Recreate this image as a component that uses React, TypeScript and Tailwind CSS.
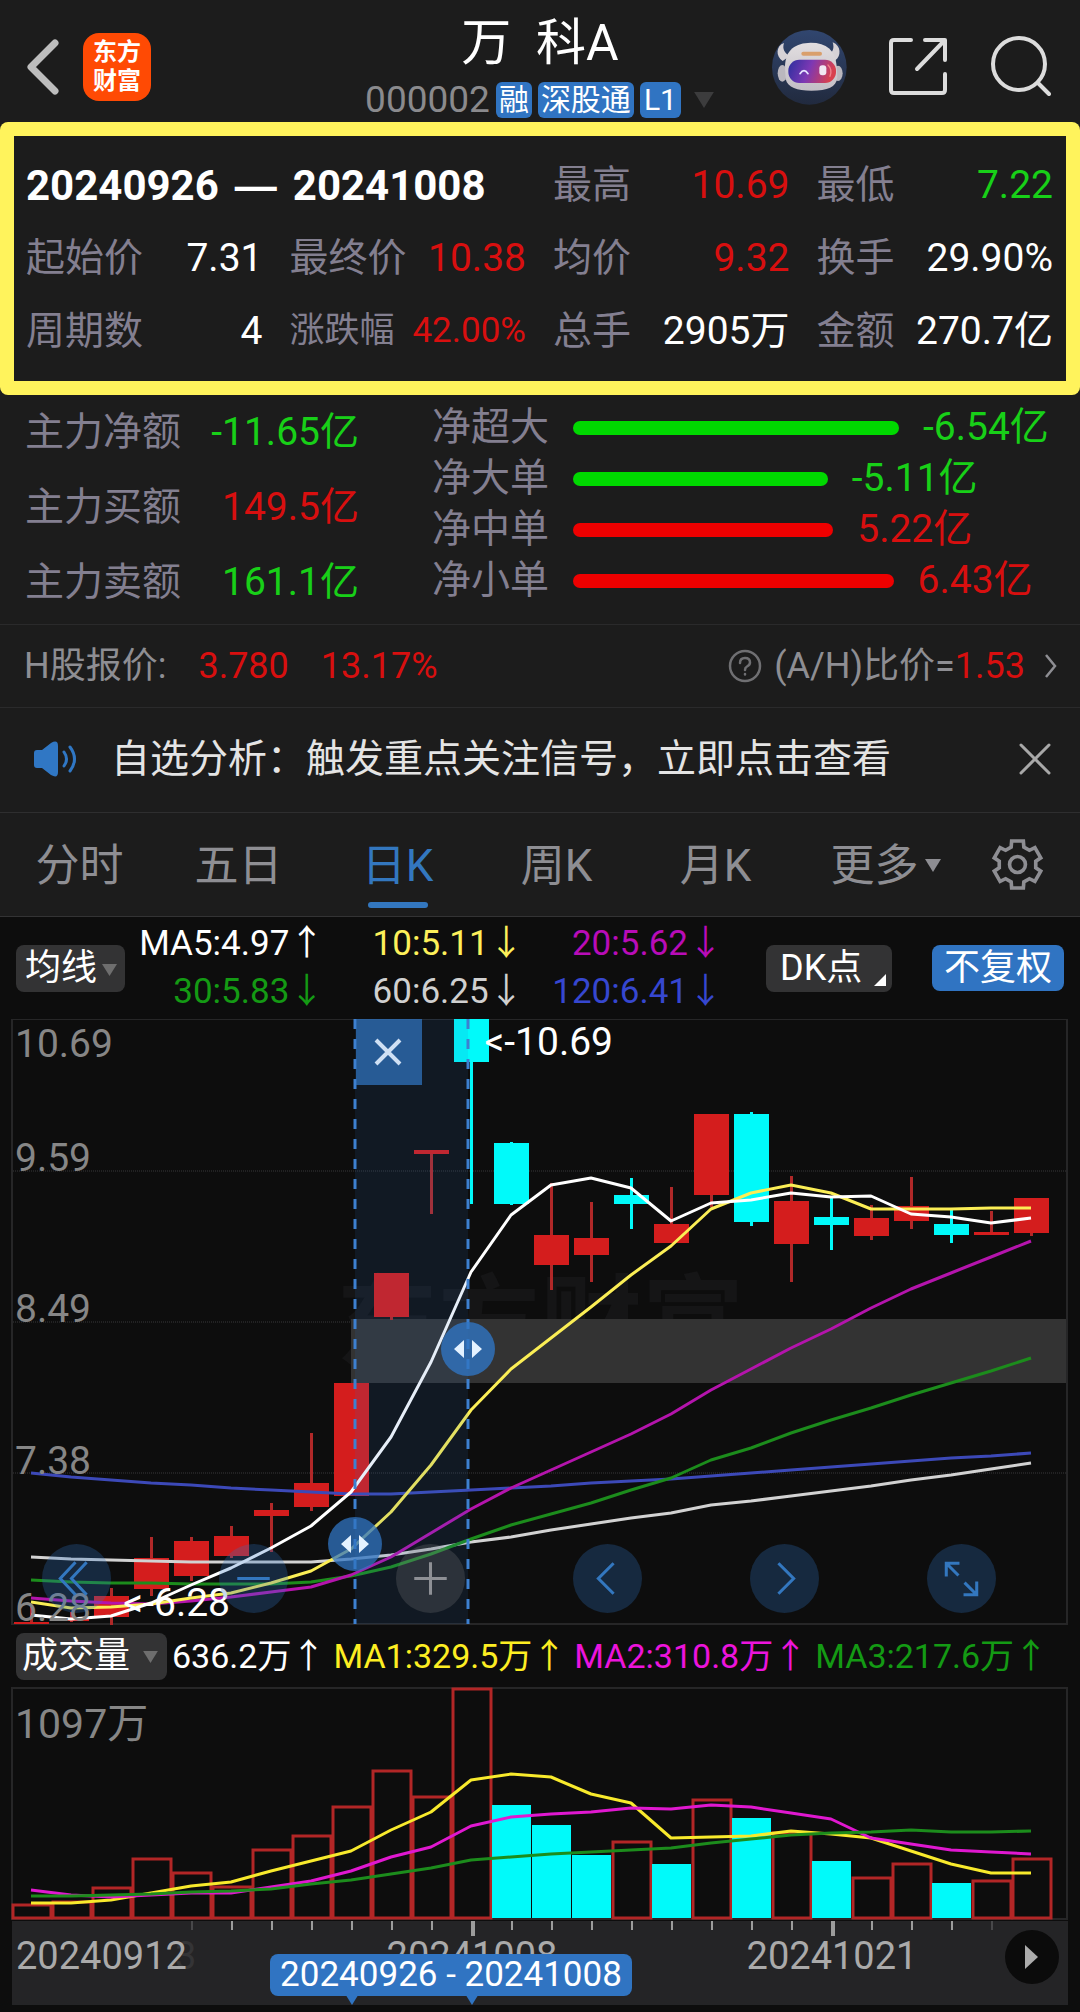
import React from "react";

type Tone = "up" | "down" | "plain";

const toneText: Record<Tone, string> = {
  up: "text-[#d80f0f]",
  down: "text-[#18d018]",
  plain: "text-white",
};

/* ---------- data ---------- */

const stats: { label: string; value: string; tone: Tone; small?: boolean }[] = [
  { label: "最高", value: "10.69", tone: "up" },
  { label: "最低", value: "7.22", tone: "down" },
  { label: "起始价", value: "7.31", tone: "plain" },
  { label: "最终价", value: "10.38", tone: "up" },
  { label: "均价", value: "9.32", tone: "up" },
  { label: "换手", value: "29.90%", tone: "plain" },
  { label: "周期数", value: "4", tone: "plain" },
  { label: "涨跌幅", value: "42.00%", tone: "up", small: true },
  { label: "总手", value: "2905万", tone: "plain" },
  { label: "金额", value: "270.7亿", tone: "plain" },
];

const mainFlow: { label: string; value: string; tone: Tone }[] = [
  { label: "主力净额", value: "-11.65亿", tone: "down" },
  { label: "主力买额", value: "149.5亿", tone: "up" },
  { label: "主力卖额", value: "161.1亿", tone: "down" },
];

const orderFlow = [
  { label: "净超大", amount: -6.54 },
  { label: "净大单", amount: -5.11 },
  { label: "净中单", amount: 5.22 },
  { label: "净小单", amount: 6.43 },
];

const averages = [
  { text: "MA5:4.97↑", color: "text-white" },
  { text: "10:5.11↓", color: "text-[#fdf05a]" },
  { text: "20:5.62↓", color: "text-[#b80cb8]" },
  { text: "30:5.83↓", color: "text-[#149a14]" },
  { text: "60:6.25↓", color: "text-[#d0d0d0]" },
  { text: "120:6.41↓", color: "text-[#3647d0]" },
];

const volumeAverages = [
  { text: "636.2万↑", color: "text-white" },
  { text: "MA1:329.5万↑", color: "text-[#fdee22]" },
  { text: "MA2:310.8万↑", color: "text-[#ec14dc]" },
  { text: "MA3:217.6万↑", color: "text-[#149a14]" },
];

const RED = "#d41d1d";
const WICK = "#b02828";
const CYAN = "#00fafa";

/* direction, body top, body bottom, high, low, in chart units */
const candles: [number, number, number, number, number][] = [
  [1, 622, 624, 607, 624],
  [1, 618, 621, 612, 622],
  [1, 596, 617, 588, 625],
  [1, 558, 589, 537, 596],
  [1, 541, 576, 537, 581],
  [1, 536, 556, 526, 558],
  [1, 510, 516, 503, 552],
  [1, 483, 507, 433, 511],
  [1, 383, 496, 383, 496],
  [1, 273, 317, 273, 320],
  [1, 150, 154, 150, 214],
  [0, 19, 62, 19, 204],
  [0, 143, 204, 142, 205],
  [1, 235, 265, 183, 290],
  [1, 238, 255, 202, 282],
  [0, 195, 204, 178, 229],
  [1, 224, 243, 187, 243],
  [1, 114, 195, 114, 207],
  [0, 114, 222, 112, 226],
  [1, 201, 244, 176, 282],
  [0, 217, 225, 197, 250],
  [1, 218, 236, 205, 240],
  [1, 206, 221, 177, 229],
  [0, 224, 235, 209, 243],
  [1, 232, 235, 211, 235],
  [1, 198, 233, 198, 236],
];

const priceLines = [
  {
    color: "#d2d2d2",
    ys: [557, 559, 560, 561, 562, 562, 562, 562, 559, 555, 549, 542, 537, 530, 524, 518, 513, 505, 501, 496, 491, 486, 480, 475, 469, 463],
  },
  {
    color: "#3c49b8",
    ys: [473, 477, 480, 483, 485, 488, 490, 492, 494, 494, 492, 490, 488, 486, 483, 481, 479, 476, 473, 470, 467, 464, 461, 458, 456, 453],
  },
  {
    color: "#1c8c1c",
    ys: [580, 582, 583, 583, 584, 584, 584, 582, 576, 567, 554, 539, 525, 514, 503, 490, 478, 460, 448, 433, 420, 408, 395, 383, 371, 358],
  },
  {
    color: "#b414ac",
    ys: [598, 601, 603, 604, 601, 597, 592, 587, 575, 557, 533, 509, 488, 470, 452, 434, 414, 390, 369, 348, 329, 308, 289, 273, 257, 241],
  },
  {
    color: "#fbee55",
    ys: [602, 608, 607, 604, 598, 593, 583, 571, 549, 512, 465, 410, 369, 338, 307, 275, 246, 209, 193, 185, 193, 209, 209, 209, 208, 208],
  },
  {
    color: "#ffffff",
    ys: [615, 619, 616, 603, 585, 568, 548, 526, 492, 437, 362, 272, 215, 185, 178, 188, 221, 203, 200, 193, 197, 196, 214, 217, 223, 218],
  },
];

/* direction and bar height */
const volumes: [number, number][] = [
  [1, 14], [1, 17], [1, 31], [1, 60], [1, 46], [1, 32], [1, 69], [1, 83], [1, 112],
  [1, 148], [1, 122], [1, 230], [0, 113], [0, 93], [0, 63], [1, 77], [0, 54], [1, 119],
  [0, 100], [1, 86], [0, 57], [1, 41], [1, 55], [0, 35], [1, 38], [1, 60],
];

const volumeLines = [
  {
    color: "#f8ea2c",
    hs: [15, 15, 18, 25, 32, 36, 47, 57, 67, 88, 106, 138, 144, 141, 124, 115, 80, 81, 82, 87, 84, 80, 67, 54, 45, 45],
  },
  {
    color: "#e018d0",
    hs: [28, 23, 21, 23, 25, 25, 31, 37, 47, 61, 71, 92, 101, 104, 106, 110, 109, 113, 111, 105, 99, 80, 74, 68, 66, 64],
  },
  {
    color: "#1c8c1c",
    hs: [22, 22, 23, 24, 26, 27, 29, 34, 38, 44, 50, 58, 61, 64, 66, 68, 70, 75, 79, 83, 85, 86, 88, 86, 86, 87],
  },
];

const centerX = (i: number) => 31 + i * 40;
const toPoints = (ys: number[]) => ys.map((y, i) => `${centerX(i)},${y}`).join(" ");

/* ---------- icons ---------- */

function RobotIcon() {
  return (
    <svg viewBox="94 57 225 225" className="block size-[75px]" aria-hidden="true">
      <defs>
        <linearGradient id="sky" x1="0" y1="0" x2="0" y2="1">
          <stop offset="0" stopColor="#31466f" />
          <stop offset="1" stopColor="#212a3e" />
        </linearGradient>
        <linearGradient id="visor" x1="0" y1="0" x2="1" y2="0.2">
          <stop offset="0" stopColor="#2b2f9e" />
          <stop offset="0.5" stopColor="#7d38b4" />
          <stop offset="1" stopColor="#d8404e" />
        </linearGradient>
        <linearGradient id="shell" x1="0" y1="0" x2="0" y2="1">
          <stop offset="0" stopColor="#e2dee0" />
          <stop offset="1" stopColor="#c2bec5" />
        </linearGradient>
      </defs>
      <circle cx="206" cy="169" r="112" fill="url(#sky)" />
      <path d="M130 96C106 104 104 136 126 150L148 134C132 128 124 114 130 96Z" fill="#d6d2d6" />
      <path d="M276 94C302 104 302 136 284 148L262 132C276 126 282 112 276 94Z" fill="#d6d2d6" />
      <ellipse cx="125" cy="187" rx="14" ry="25" fill="#bab7be" />
      <ellipse cx="292" cy="187" rx="14" ry="23" fill="#bab7be" />
      <path
        d="M133 165C135 115 165 96 210 95C258 95 284 118 288 165L290 200C286 228 262 238 212 239C168 239 142 230 135 205Z"
        fill="url(#shell)"
      />
      <rect x="182" y="122" width="62" height="12" rx="6" fill="#d99f6c" />
      <rect x="143" y="146" width="143" height="70" rx="33" fill="url(#visor)" />
      <path d="M178 188Q190 170 202 188" fill="none" stroke="#e6e2ff" strokeWidth="5" strokeLinecap="round" />
      <rect x="236" y="163" width="21" height="30" rx="9" fill="#f1e6f2" />
      <path d="M262 162Q276 176 268 196" fill="none" stroke="#f0808a" strokeWidth="4" strokeLinecap="round" />
    </svg>
  );
}

function gearPath() {
  const pts: string[] = [];
  for (let k = 0; k < 6; k++) {
    const a = k * 60 - 90;
    for (const [off, r] of [[-20, 56], [-14, 73], [14, 73], [20, 56]]) {
      const t = ((a + off) * Math.PI) / 180;
      pts.push(`${(80 + r * Math.cos(t)).toFixed(1)} ${(80 + r * Math.sin(t)).toFixed(1)}`);
    }
  }
  return `M${pts.join("L")}Z`;
}

function GearIcon() {
  return (
    <svg viewBox="0 0 160 160" className="block size-[53px]" fill="none" stroke="#8e8e93" strokeWidth="11" aria-hidden="true">
      <path d={gearPath()} />
      <circle cx="80" cy="80" r="24" />
    </svg>
  );
}

function Caret({ className }: { className: string }) {
  return (
    <svg viewBox="0 0 16 13" className={className} fill="currentColor" aria-hidden="true">
      <path d="M0 0H16L8 13Z" />
    </svg>
  );
}

/* ---------- sections ---------- */

function Header() {
  return (
    <header className="grid h-[122px] grid-cols-[1fr_auto_1fr] bg-[#1c1c1c]">
      <div className="flex items-center gap-[22px] pt-3 pl-[25px]">
        <button type="button" aria-label="返回">
          <svg viewBox="0 0 36 60" className="block h-[60px] w-9" fill="none" stroke="#bdbdbd" strokeWidth="7" strokeLinecap="round" strokeLinejoin="round">
            <path d="M30 6L6 30L30 54" />
          </svg>
        </button>
        <a
          href="#home"
          className="flex size-[68px] flex-col items-center justify-center rounded-2xl bg-[#ff4a04] text-2xl leading-[29px] font-bold text-white"
        >
          <span>东方</span>
          <span>财富</span>
        </a>
      </div>
      <div className="flex flex-col items-center pt-3">
        <h1 className="text-[50px] leading-[62px] whitespace-pre text-white">{"万  科A"}</h1>
        <div className="flex items-center gap-1.5 pt-2 text-3xl leading-[36px] text-white">
          <span className="text-[37px] text-[#8a8a8d]">000002</span>
          <span className="rounded-md bg-[#3074c2] px-[3px]">融</span>
          <span className="rounded-md bg-[#3074c2] px-[3px]">深股通</span>
          <span className="rounded-md bg-[#3074c2] px-1">L1</span>
          <Caret className="ml-1.5 h-4 w-[22px] text-[#3c3c3d]" />
        </div>
      </div>
      <div className="flex items-center justify-end gap-10 pt-3 pr-[29px]">
        <button type="button" aria-label="智能助手">
          <RobotIcon />
        </button>
        <button type="button" aria-label="分享">
          <svg viewBox="0 0 62 62" className="block size-[62px]" fill="none" stroke="#dcdcdc" strokeWidth="4" strokeLinecap="round" strokeLinejoin="round">
            <path d="M24 4H7Q4 4 4 7V54Q4 57 7 57H55Q58 57 58 54V38M38 4H58V24M57 5L30 33" />
          </svg>
        </button>
        <button type="button" aria-label="搜索">
          <svg viewBox="0 0 62 62" className="block size-[62px]" fill="none" stroke="#dcdcdc" strokeWidth="4" strokeLinecap="round">
            <circle cx="30" cy="28" r="26" />
            <path d="M49 47L60 58" />
          </svg>
        </button>
      </div>
    </header>
  );
}

function RangeStats() {
  return (
    <section className="rounded-lg bg-[#fff35c] p-3.5">
      <div className="grid auto-rows-[73px] grid-cols-4 gap-x-[27px] bg-[#1c1c1c] pt-[13px] pr-[13px] pb-[13px] pl-3 text-[39px] whitespace-nowrap">
        <h2 className="col-span-2 flex items-center gap-4 text-[42px] font-bold text-white">
          <span>20240926</span>
          <span className="font-['Liberation_Sans']">—</span>
          <span>20241008</span>
        </h2>
        {stats.map((s) => (
          <div key={s.label} className="flex items-center justify-between">
            <span className={s.small ? "text-[35px] text-[#837f90]" : "text-[#837f90]"}>{s.label}</span>
            <span className={`${toneText[s.tone]} ${s.small ? "text-[35px]" : ""}`}>{s.value}</span>
          </div>
        ))}
      </div>
    </section>
  );
}

function MoneyFlow() {
  return (
    <section className="flex h-[230px] border-b border-[#2a2a2b] bg-[#1c1c1c] pr-6 pl-[25px] text-[39px] whitespace-nowrap">
      <div className="w-[334px]">
        {mainFlow.map((f) => (
          <div key={f.label} className="flex h-[75px] items-center justify-between">
            <span className="text-[#837f90]">{f.label}</span>
            <span className={toneText[f.tone]}>{f.value}</span>
          </div>
        ))}
      </div>
      <div className="flex-1 pt-[7px] pl-[73px]">
        {orderFlow.map((o) => {
          const up = o.amount > 0;
          return (
            <div key={o.label} className="flex h-[51px] items-center">
              <span className="pr-6 text-[#837f90]">{o.label}</span>
              <div className="flex flex-1 items-center gap-6">
                <div
                  className={up ? "h-3.5 shrink-0 rounded-full bg-[#ee0000]" : "h-3.5 shrink-0 rounded-full bg-[#00d800]"}
                  style={{ width: `${(Math.abs(o.amount) / 6.54) * 67.5}%` }}
                />
                <span className={up ? toneText.up : toneText.down}>{o.amount.toFixed(2)}亿</span>
              </div>
            </div>
          );
        })}
      </div>
    </section>
  );
}

function HShareRow() {
  return (
    <section className="flex h-[83px] items-center justify-between border-b border-[#2a2a2b] bg-[#1c1c1c] pr-[23px] pb-px pl-6 text-[36px] whitespace-nowrap text-[#8e8e93]">
      <div className="flex">
        <span>H股报价:</span>
        <span className="pl-8 text-[#d80f0f]">3.780</span>
        <span className="pl-8 text-[#d80f0f]">13.17%</span>
      </div>
      <a href="#ah" className="flex items-center">
        <svg viewBox="0 0 34 34" className="mr-3 block size-[34px]" fill="none" stroke="#6f6f72" strokeWidth="2.5" strokeLinecap="round" aria-hidden="true">
          <circle cx="17" cy="17" r="15" />
          <path d="M12 14Q12 9 17 9T22 13.500Q22 16 19 17.500Q17 18.500 17 21M17 25V25.500" />
        </svg>
        <span>(A/H)比价=</span>
        <span className="text-[#d80f0f]">1.53</span>
        <svg viewBox="0 0 12 24" className="ml-5 block h-6 w-3" fill="none" stroke="#8e8e93" strokeWidth="2.500" aria-hidden="true">
          <path d="M1 1L10 12L1 23" />
        </svg>
      </a>
    </section>
  );
}

function Notice() {
  return (
    <section className="flex h-[105px] items-center border-b border-[#2e2e2f] bg-[#1c1c1c] pr-[29px] pb-0.5 pl-[34px]">
      <svg viewBox="0 0 44 36" className="block h-9 w-11" fill="none" stroke="#3077c4" strokeWidth="3" strokeLinecap="round" aria-hidden="true">
        <path d="M3 9H8L17 2Q24 -2 24 5V31Q24 38 17 34L8 27H3Q0 27 0 24V12Q0 9 3 9Z" fill="#3077c4" stroke="none" />
        <path d="M30 11Q35 18 30 25M36 6Q45 18 36 30" />
      </svg>
      <a href="#signal" className="flex-1 pl-[33px] text-[39px] whitespace-nowrap text-[#e4e4e4]">
        自选分析：触发重点关注信号，立即点击查看
      </a>
      <button type="button" aria-label="关闭">
        <svg viewBox="0 0 32 32" className="block size-8" fill="none" stroke="#a8a8a8" strokeWidth="3" strokeLinecap="round">
          <path d="M2 2L30 30M30 2L2 30" />
        </svg>
      </button>
    </section>
  );
}

const tabs = ["分时", "五日", "日K", "周K", "月K", "更多"];

function PeriodTabs() {
  return (
    <nav className="flex h-[104px] items-stretch border-b border-[#333334] bg-[#1c1c1c] text-[44px] text-[#8e8e93]">
      {tabs.map((t) => {
        const active = t === "日K";
        return (
          <button
            key={t}
            type="button"
            aria-current={active ? "page" : undefined}
            className={`flex flex-1 flex-col items-center pt-[21px] leading-[64px] ${active ? "text-[#3377bf]" : ""}`}
          >
            <span className="relative">
              {t}
              {t === "更多" && <Caret className="absolute top-[25px] left-full ml-1.5 h-[13px] w-4" />}
            </span>
            {active && <span className="mt-1 h-1.5 w-[60px] rounded-full bg-[#3377bf]" />}
          </button>
        );
      })}
      <button type="button" aria-label="设置" className="flex w-[126px] items-center justify-center">
        <GearIcon />
      </button>
    </nav>
  );
}

function AverageBar() {
  return (
    <section className="flex h-[102px] items-center pr-4 pl-4">
      <div className="relative">
        <select
          aria-label="主图指标"
          className="block h-[47px] w-[109px] appearance-none rounded-lg bg-[#333334] pl-[9px] text-[36px] leading-[47px] text-white"
        >
          <option>均线</option>
        </select>
        <Caret className="pointer-events-none absolute top-[18px] right-2 h-3.5 w-[15px] text-[#6e6e6e]" />
      </div>
      <div className="grid w-[598px] grid-cols-3 text-right text-[35px] leading-[48px] whitespace-nowrap">
        {averages.map((a) => (
          <span key={a.text} className={a.color}>
            {a.text}
          </span>
        ))}
      </div>
      <div className="flex flex-1 items-center justify-between pl-[43px]">
        <button type="button" className="relative h-[47px] w-[126px] rounded-lg bg-[#333334] pl-3.5 text-left text-[36px] leading-[47px] text-white">
          DK点
          <svg viewBox="0 0 12 12" className="absolute right-1.5 bottom-1.5 size-3" fill="#fff" aria-hidden="true">
            <path d="M12 0V12H0Z" />
          </svg>
        </button>
        <button type="button" className="h-[46px] w-[132px] rounded-lg bg-[#3074c2] text-center text-[36px] leading-[46px] text-white">
          不复权
        </button>
      </div>
    </section>
  );
}

function HandleIcon() {
  return (
    <svg viewBox="0 0 54 54" className="block size-full" fill="#e4f2ff" aria-hidden="true">
      <path d="M23 18V36L13 27ZM31 18V36L41 27Z" />
    </svg>
  );
}

const controls = [
  { name: "最左", d: "M33 18L18 34L33 50M44 18L29 34L44 50" },
  { name: "缩小", d: "M18 34H50" },
  { name: "放大", d: "M18 34H50M34 18V50" },
  { name: "向左", d: "M40 19L25 34L40 49" },
  { name: "向右", d: "M28 19L43 34L28 49" },
  { name: "全屏", d: "M19 32V19H32M19 19L31 31M49 37V50H36M49 50L37 38" },
];

function PriceChart() {
  return (
    <section className="relative">
      <svg viewBox="0 19 1080 606" className="block h-auto w-full" role="img" aria-label="日K线图">
        <text x="336" y="360" fontSize="102" fontWeight="700" fill="#151516">
          东方财富
        </text>
        {[171, 322, 473].map((y) => (
          <path key={y} d={`M13 ${y}H1067`} stroke="#39393a" strokeWidth="1" strokeDasharray="1 1" />
        ))}
        <rect x="351" y="319" width="716" height="64" fill="#333333" />
        <rect x="12" y="19" width="1055" height="605" fill="none" stroke="#262627" strokeWidth="2" />
        {candles.map(([up, top, bottom, high, low], i) => (
          <g key={i} fill={up ? RED : CYAN}>
            <rect x={centerX(i) - 1} y={high} width="3" height={low - high} fill={up ? WICK : CYAN} />
            <rect x={centerX(i) - 17} y={top} width="35" height={bottom - top} />
          </g>
        ))}
        <g fill="none" strokeWidth="3" strokeLinejoin="round">
          {priceLines.map((l) => (
            <polyline key={l.color} points={toPoints(l.ys)} stroke={l.color} />
          ))}
        </g>
        <g fill="#868686" fontSize="39">
          <text x="15" y="57">10.69</text>
          <text x="15" y="171">9.59</text>
          <text x="15" y="322">8.49</text>
          <text x="15" y="474">7.38</text>
          <text x="15" y="621">6.28</text>
        </g>
        <rect x="355" y="19" width="113" height="605" fill="#3074c2" fillOpacity="0.12" />
        <g fill="#ffffff" fontSize="39" textAnchor="end">
          <text x="613" y="55">&lt;-10.69</text>
          <text x="230" y="616">&lt;-6.28</text>
        </g>
        <path d="M355 19V624M468 19V624" stroke="#3d80d0" strokeWidth="3" strokeDasharray="10 10" />
      </svg>
      <button type="button" aria-label="关闭区间统计" className="absolute top-0 left-[33%] size-[66px] bg-[#3074c2]/72">
        <svg viewBox="0 0 66 66" className="block size-full" fill="none" stroke="#cfe0f4" strokeWidth="4">
          <path d="M20 21L44 45M44 21L20 45" />
        </svg>
      </button>
      <button type="button" aria-label="区间终点" className="absolute top-[50%] left-[43.3%] size-[54px] -translate-x-1/2 rounded-full bg-[#3074c2]/80">
        <HandleIcon />
      </button>
      <button type="button" aria-label="区间起点" className="absolute bottom-[54px] left-[32.9%] size-[54px] -translate-x-1/2 rounded-full bg-[#3074c2]/75">
        <HandleIcon />
      </button>
      <div className="absolute inset-x-0 bottom-3 flex justify-between pr-[84px] pl-[42px]">
        {controls.map((c) => {
          const muted = c.name === "放大";
          return (
            <button
              key={c.name}
              type="button"
              aria-label={c.name}
              className={`size-[69px] rounded-full ${muted ? "bg-[#808080]/25 text-[#8e9095]" : "bg-[#3074c2]/28 text-[#3377bf]"}`}
            >
              <svg viewBox="0 0 68 68" className="block size-full" fill="none" stroke="currentColor" strokeWidth="3">
                <path d={c.d} />
              </svg>
            </button>
          );
        })}
      </div>
    </section>
  );
}

function VolumeBar() {
  return (
    <section className="flex h-[62px] items-center pl-4 whitespace-nowrap">
      <div className="relative">
        <select
          aria-label="副图指标"
          className="block h-[47px] w-[151px] appearance-none rounded-lg bg-[#333334] pl-1.5 text-[36px] leading-[47px] text-white"
        >
          <option>成交量</option>
        </select>
        <Caret className="pointer-events-none absolute top-[18px] right-[9px] h-3 w-[15px] text-[#6e6e6e]" />
      </div>
      <div className="flex gap-2 pl-[5px] text-[34px]">
        {volumeAverages.map((v) => (
          <span key={v.text} className={v.color}>
            {v.text}
          </span>
        ))}
      </div>
    </section>
  );
}

function VolumeChart() {
  const base = 231;
  return (
    <svg viewBox="0 0 1080 233" className="block h-auto w-full" role="img" aria-label="成交量图">
      <rect x="12" y="1" width="1055" height="231" fill="none" stroke="#262627" strokeWidth="2" />
      <text x="15" y="51" fontSize="41" fill="#868686">
        1097万
      </text>
      {volumes.map(([up, h], i) =>
        up ? (
          <rect key={i} x={centerX(i) - 18} y={base - h + 1} width="38" height={h - 1} fill="none" stroke="#b22626" strokeWidth="3" />
        ) : (
          <rect key={i} x={centerX(i) - 19} y={base - h} width="39" height={h} fill={CYAN} />
        ),
      )}
      <g fill="none" strokeWidth="3" strokeLinejoin="round">
        {volumeLines.map((l) => (
          <polyline key={l.color} points={toPoints(l.hs.map((h) => base - h))} stroke={l.color} />
        ))}
      </g>
    </svg>
  );
}

function DateAxis() {
  const ticks = Array.from({ length: 21 }, (_, k) => k + 4);
  return (
    <section className="relative mb-[7px]">
      <svg viewBox="0 0 1080 85" className="block h-auto w-full" role="img" aria-label="日期轴">
        <rect x="12" y="1" width="1056" height="84" fill="#242426" />
        {ticks.map((i) => {
          const major = i === 11 || i === 20;
          const faint = i === 4 || i === 24;
          return (
            <rect
              key={i}
              x={centerX(i)}
              y="1"
              width={major ? 4 : 2}
              height={major ? 15 : 9}
              fill={faint ? "#48484a" : "#9c9c9c"}
            />
          );
        })}
        <g fontSize="38" fill="#aaaaaa">
          <text x="175" y="49" fill="#343436">3</text>
          <text x="16" y="49">20240912</text>
          <text x="472" y="49" textAnchor="middle">20241008</text>
          <text x="832" y="49" textAnchor="middle">20241021</text>
        </g>
      </svg>
      <div className="absolute top-[34px] left-[25%] h-[42px] w-[362px] rounded-lg bg-[#3074c2] text-center text-[35px] leading-[42px] whitespace-nowrap text-white">
        20240926 - 20241008
        <Caret className="absolute top-full left-[73px] h-[9px] w-[18px] text-[#3074c2]" />
        <Caret className="absolute top-full left-[193px] h-[9px] w-[18px] text-[#3074c2]" />
      </div>
      <button type="button" aria-label="播放" className="absolute top-2.5 right-[21px] size-[54px] rounded-full bg-[#0b0b0b]">
        <svg viewBox="0 0 54 54" className="block size-full" fill="#acacac">
          <path d="M20 15V39L33 27Z" />
        </svg>
      </button>
    </section>
  );
}

export default function App() {
  return (
    <main className="min-h-screen overflow-x-hidden bg-[#0d0d0d] font-['Roboto','Noto_Sans_CJK_SC',sans-serif]">
      <div className="bg-[#1c1c1c]">
        <Header />
        <RangeStats />
      </div>
      <MoneyFlow />
      <HShareRow />
      <Notice />
      <PeriodTabs />
      <AverageBar />
      <PriceChart />
      <VolumeBar />
      <VolumeChart />
      <DateAxis />
    </main>
  );
}
